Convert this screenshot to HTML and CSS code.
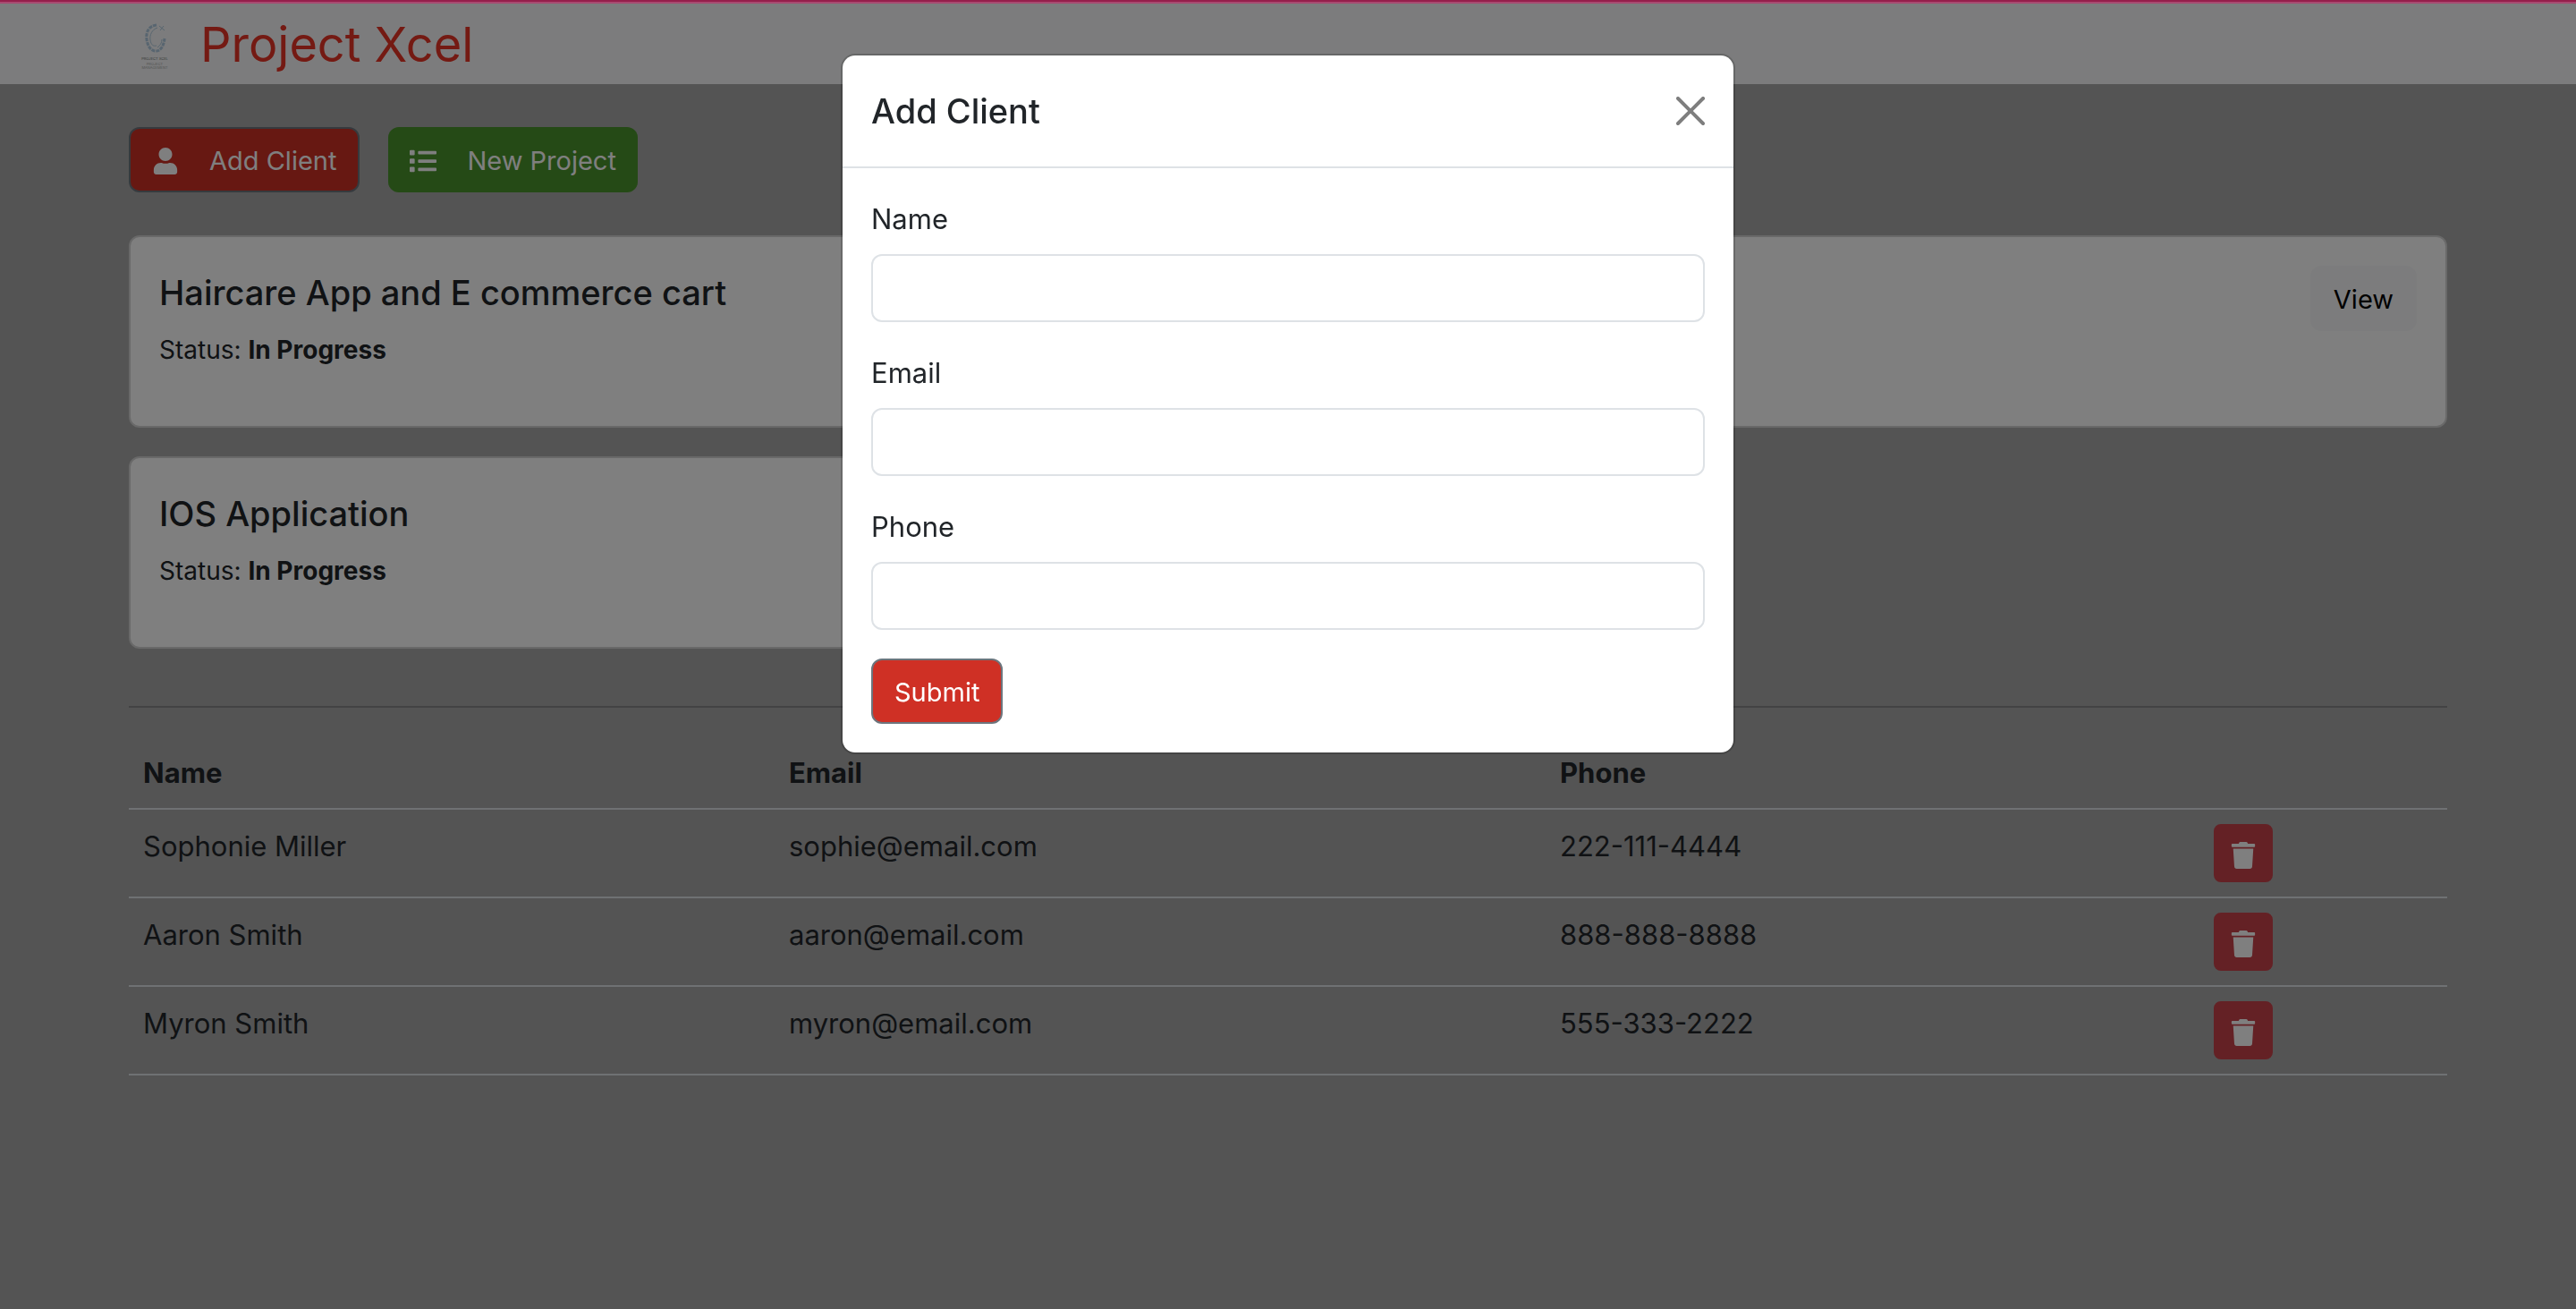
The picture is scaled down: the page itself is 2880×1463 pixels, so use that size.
FILE: index.html
```html
<!DOCTYPE html>
<html lang="en">
<head>
  <meta charset="utf-8">
  <meta name="viewport" content="width=device-width, initial-scale=1">
  <title>Project Xcel</title>
  <link rel="stylesheet" href="styles.css">
</head>
<body>
  <svg class="sprite" aria-hidden="true">
    <symbol id="icon-user" viewBox="0 0 448 512"><path d="M224 256c70.7 0 128-57.3 128-128S294.700 0 224 0 96 57.300 96 128s57.300 128 128 128zm89.600 32h-16.700c-22.200 10.200-46.900 16-72.900 16s-50.600-5.800-72.900-16h-16.700C60.200 288 0 348.200 0 422.400V464c0 26.500 21.500 48 48 48h352c26.500 0 48-21.500 48-48v-41.600c0-74.200-60.200-134.400-134.400-134.400z"/></symbol>
    <symbol id="icon-list" viewBox="0 0 512 512"><path d="M80 368H16a16 16 0 0 0-16 16v64a16 16 0 0 0 16 16h64a16 16 0 0 0 16-16v-64a16 16 0 0 0-16-16zm0-320H16A16 16 0 0 0 0 64v64a16 16 0 0 0 16 16h64a16 16 0 0 0 16-16V64a16 16 0 0 0-16-16zm0 160H16a16 16 0 0 0-16 16v64a16 16 0 0 0 16 16h64a16 16 0 0 0 16-16v-64a16 16 0 0 0-16-16zm416 176H176a16 16 0 0 0-16 16v32a16 16 0 0 0 16 16h320a16 16 0 0 0 16-16v-32a16 16 0 0 0-16-16zm0-320H176a16 16 0 0 0-16 16v32a16 16 0 0 0 16 16h320a16 16 0 0 0 16-16V80a16 16 0 0 0-16-16zm0 160H176a16 16 0 0 0-16 16v32a16 16 0 0 0 16 16h320a16 16 0 0 0 16-16v-32a16 16 0 0 0-16-16z"/></symbol>
    <symbol id="icon-trash" viewBox="0 0 448 512"><path d="M432 32H312l-9.400-18.700A24 24 0 0 0 281.100 0H166.800a23.720 23.720 0 0 0-21.400 13.300L136 32H16A16 16 0 0 0 0 48v32a16 16 0 0 0 16 16h416a16 16 0 0 0 16-16V48a16 16 0 0 0-16-16zM53.200 467a48 48 0 0 0 47.900 45h245.800a48 48 0 0 0 47.900-45L416 128H32z"/></symbol>
  </svg>

  <div class="progress"></div>

  <header class="navbar">
    <a class="brand" href="#">
      <svg class="brand-logo" viewBox="0 0 58 58" aria-hidden="true">
        <g fill="none" stroke="#b0cbe0">
          <path d="M31 8C22 9 19 16 20 24c1 7 4 12 9 13 6 1 10-5 11-14" stroke-width="3" stroke-dasharray="4 1"/>
          <path d="M32 11c-6 2-9 8-8 14 1 5 3 7 7 6" stroke-width="1"/>
          <path d="M34 9l6 5M39 9l-4 5M37 24c0 4-2 7-5 9" stroke-width="1"/>
        </g>
        <text class="logo-name" x="29" y="47">PROJECT XCEL</text>
        <text class="logo-tag" x="29" y="53">PROJECT</text>
        <text class="logo-tag" x="29" y="57">MANAGEMENT</text>
      </svg>
      <span class="brand-name">Project Xcel</span>
    </a>
  </header>

  <main class="container">
    <div class="actions">
      <button class="btn btn-primary" type="button"><svg class="icon icon-lead"><use href="#icon-user"/></svg>Add Client</button>
      <button class="btn btn-success" type="button"><svg class="icon icon-lead"><use href="#icon-list"/></svg>New Project</button>
    </div>

    <section class="projects">
      <article class="card card-wide">
        <div class="card-head">
          <h5 class="card-title">Haircare App and E commerce cart</h5>
          <a class="btn btn-light" href="#">View</a>
        </div>
        <p class="status">Status: <strong>In Progress</strong></p>
      </article>
      <article class="card">
        <div class="card-head">
          <h5 class="card-title">IOS Application</h5>
          <a class="btn btn-light" href="#">View</a>
        </div>
        <p class="status">Status: <strong>In Progress</strong></p>
      </article>
    </section>

    <hr class="divider">

    <table class="clients">
      <colgroup>
        <col class="col-name"><col class="col-email"><col class="col-phone"><col class="col-delete">
      </colgroup>
      <thead>
        <tr><th>Name</th><th>Email</th><th>Phone</th><th></th></tr>
      </thead>
      <tbody>
        <tr>
          <td>Sophonie Miller</td><td>sophie@email.com</td><td>222-111-4444</td>
          <td class="cell-delete"><button class="btn btn-danger" type="button" aria-label="Delete Sophonie Miller"><svg class="icon"><use href="#icon-trash"/></svg></button></td>
        </tr>
        <tr>
          <td>Aaron Smith</td><td>aaron@email.com</td><td>888-888-8888</td>
          <td class="cell-delete"><button class="btn btn-danger" type="button" aria-label="Delete Aaron Smith"><svg class="icon"><use href="#icon-trash"/></svg></button></td>
        </tr>
        <tr>
          <td>Myron Smith</td><td>myron@email.com</td><td>555-333-2222</td>
          <td class="cell-delete"><button class="btn btn-danger" type="button" aria-label="Delete Myron Smith"><svg class="icon"><use href="#icon-trash"/></svg></button></td>
        </tr>
      </tbody>
    </table>
  </main>

  <div class="backdrop">
    <div class="modal" role="dialog" aria-modal="true" aria-labelledby="modal-title">
      <div class="modal-header">
        <h5 class="modal-title" id="modal-title">Add Client</h5>
        <button class="close" type="button" aria-label="Close">
          <svg viewBox="0 0 16 16"><path d="M.293.293a1 1 0 0 1 1.414 0L8 6.586 14.293.293a1 1 0 1 1 1.414 1.414L9.414 8l6.293 6.293a1 1 0 0 1-1.414 1.414L8 9.414l-6.293 6.293a1 1 0 0 1-1.414-1.414L6.586 8 .293 1.707a1 1 0 0 1 0-1.414z"/></svg>
        </button>
      </div>
      <form class="modal-body">
        <div class="field">
          <label for="name">Name</label>
          <input id="name" type="text">
        </div>
        <div class="field">
          <label for="email">Email</label>
          <input id="email" type="email">
        </div>
        <div class="field">
          <label for="phone">Phone</label>
          <input id="phone" type="text">
        </div>
        <button class="btn btn-primary" type="submit">Submit</button>
      </form>
    </div>
  </div>
</body>
</html>
```
FILE: styles.css
```css
*,
*::before,
*::after {
  box-sizing: border-box;
}

body {
  margin: 0;
  background: #a8a8a8;
  color: #212529;
  font-family: Inter, "Liberation Sans", sans-serif;
  font-size: 31px;
  line-height: 48px;
}

.sprite {
  display: none;
}

/* loading line, drawn above the backdrop */
.progress {
  position: relative;
  z-index: 20;
  height: 4px;
  background: #a84a71;
  border-top: 2px solid #941f4b;
}

.navbar {
  background: #f8f9fa;
  padding: 0 5%;
}

.brand {
  display: flex;
  align-items: center;
  gap: 22px;
  height: 90px;
  color: #e83426;
  font-size: 54px;
  text-decoration: none;
}

.brand-logo {
  width: 58px;
  height: 58px;
}

.brand-name {
  padding-top: 2px;
}

.logo-name,
.logo-tag {
  fill: #777;
  font-size: 4px;
  text-anchor: middle;
}

.logo-tag {
  fill: #aaa;
}

.container {
  padding: 48px 5%;
}

.actions {
  display: flex;
  gap: 32px;
  margin-bottom: 48px;
}

.btn {
  display: inline-block;
  padding: 13px 24px 11px;
  border: 2px solid transparent;
  border-radius: 12px;
  color: #fff;
  font-family: inherit;
  font-size: 29px;
  line-height: 45px;
  text-decoration: none;
}

.btn-primary {
  background: #cf3025;
  border-color: #6c757d;
}

.btn-success {
  background: #4a942c;
  border-width: 2px 0;
  border-color: #4a942c;
}

.btn-light {
  background: #f8f9fa;
  border-color: #f8f9fa;
  color: #000;
}

.btn-danger {
  display: block;
  padding: 8px 16px;
  border-color: #c8434a;
  border-radius: 8px;
  background: #c8434a;
}

.icon {
  width: 30px;
  height: 30px;
  fill: currentColor;
  vertical-align: middle;
}

.icon-lead {
  margin-right: 34px;
}

.actions .btn {
  display: flex;
  align-items: center;
}

.projects {
  display: grid;
  grid-template-columns: 1fr 1fr;
  gap: 32px;
}

.card {
  padding: 32px;
  background: #fff;
  border: 2px solid #d2d2d2;
  border-radius: 12px;
}

.card-wide {
  grid-column: 1 / -1;
}

.card-head {
  display: flex;
  justify-content: space-between;
  align-items: center;
}

.card-title,
.modal-title {
  margin: 0;
  font-size: 38px;
  font-weight: 500;
  line-height: 60px;
}

.card-title {
  margin-bottom: 14px;
  line-height: 48px;
}

.status {
  margin: 0 0 32px;
  font-size: 28px;
  line-height: 42px;
}

.divider {
  margin: 64px 0 32px;
  border: 0;
  border-top: 2px solid #868788;
}

.clients {
  width: 100%;
  table-layout: fixed;
  border-collapse: separate;
  border-spacing: 0;
}

.col-name {
  width: 722px;
}

.col-email {
  width: 862px;
}

.col-phone {
  width: 731px;
}

.col-delete {
  width: 277px;
}

.clients th,
.clients td {
  padding: 17px 16px 15px;
  border-bottom: 2px solid #dee2e6;
  text-align: left;
  vertical-align: top;
}

.clients .cell-delete {
  padding: 16px;
}

.backdrop {
  position: fixed;
  inset: 0;
  z-index: 10;
  padding-top: 60px;
  background: rgba(0, 0, 0, 0.5);
}

.modal {
  width: 1000px;
  max-width: 100%;
  margin: 0 auto;
  background: #fff;
  background-clip: padding-box;
  border: 2px solid rgba(0, 0, 0, 0.175);
  border-radius: 16px;
}

.modal-header {
  display: flex;
  justify-content: space-between;
  align-items: center;
  padding: 32px;
  border-bottom: 2px solid #dee2e6;
}

.close {
  padding: 0;
  border: 0;
  background: none;
  line-height: 0;
  opacity: 0.5;
}

.close svg {
  width: 32px;
  height: 32px;
}

.modal-body {
  padding: 32px;
}

.modal-body .btn {
  display: block;
}

.field {
  margin-bottom: 32px;
}

.field label {
  display: block;
  padding-top: 1px;
  margin-bottom: 15px;
}

.field input {
  display: block;
  width: 100%;
  height: 76px;
  padding: 12px 24px;
  border: 2px solid #dee2e6;
  border-radius: 12px;
  background: #fff;
  color: inherit;
  font: inherit;
}
```
